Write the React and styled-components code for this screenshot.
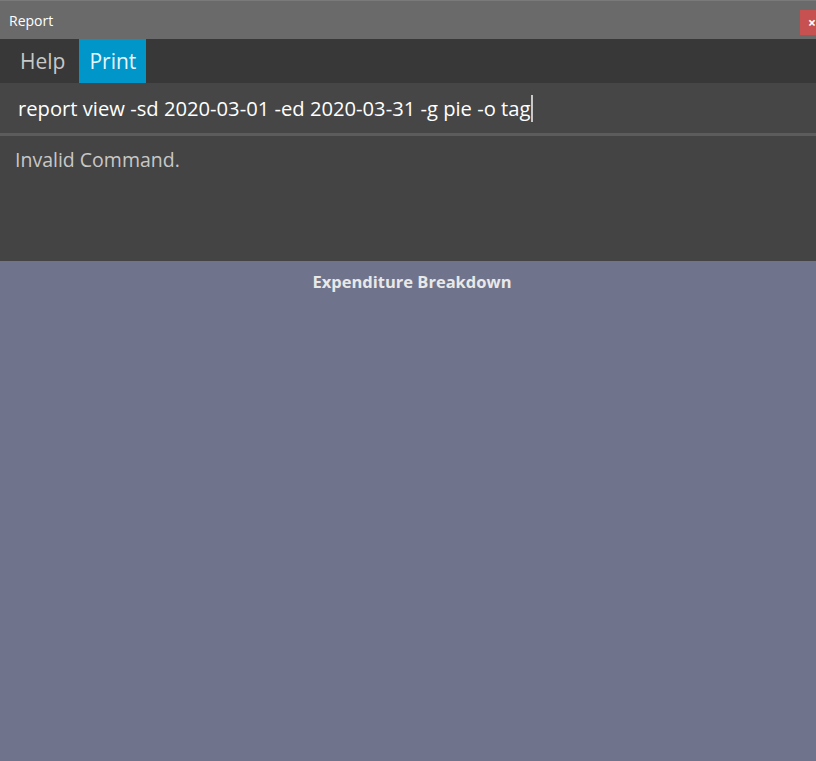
import React from "react";
import styled, { createGlobalStyle } from "styled-components";

const Global = createGlobalStyle`
  html, body {
    margin: 0;
    padding: 0;
    height: 100%;
    background: #6f738c;
  }
  #root {
    height: 100%;
  }
`;

const Window = styled.div`
  display: flex;
  flex-direction: column;
  width: 816px;
  height: 761px;
  font-family: "Open Sans", "Noto Sans", sans-serif;
  overflow: hidden;
`;

const TitleBar = styled.div`
  display: flex;
  align-items: center;
  justify-content: space-between;
  height: 39px;
  background: #6a6a6a;
  border-top: 1px solid #7a7a7a;
  box-sizing: border-box;
  padding-left: 9px;
`;

const Title = styled.span`
  color: #ffffff;
  font-size: 14px;
`;

const CloseButton = styled.div`
  display: flex;
  align-items: center;
  width: 16px;
  height: 25px;
  box-sizing: border-box;
  padding-left: 8px;
  margin-top: 4px;
  background: #c75050;
  color: #fff;
  font-size: 14px;
  font-weight: 700;
  overflow: hidden;
`;

const MenuBar = styled.div`
  display: flex;
  gap: 4px;
  height: 44px;
  background: #383838;
  padding-left: 10px;
`;

const MenuItem = styled.div`
  display: flex;
  align-items: center;
  padding: 0 10px;
  font-size: 21px;
  color: ${(p) => (p.active ? "#e6f4fb" : "#c8c8c8")};
  background: ${(p) => (p.active ? "#0096c9" : "transparent")};
`;

const CommandBox = styled.div`
  display: flex;
  align-items: center;
  height: 50px;
  padding-left: 18px;
  background: #464646;
  border-bottom: 3px solid #5c5c5c;
  color: #ffffff;
  font-size: 20.2px;
`;

const Caret = styled.span`
  display: inline-block;
  width: 2px;
  height: 27px;
  margin-left: 1px;
  background: #c8c8c8;
`;

const ResultArea = styled.div`
  height: 125px;
  background: #444444;
  padding: 10px 15px;
  box-sizing: border-box;
  color: #c8c8c8;
  font-size: 19.5px;
`;

const ChartArea = styled.div`
  flex: 1;
  background: #6f738c;
  display: flex;
  flex-direction: column;
  align-items: center;
  padding-top: 9px;
`;

const ChartTitle = styled.div`
  color: #e8e8e8;
  font-size: 16.5px;
  font-weight: 700;
  margin-left: 8px;
`;

export default function App() {
  return (
    <>
      <Global />
      <Window>
        <TitleBar>
          <Title>Report</Title>
          <CloseButton>×</CloseButton>
        </TitleBar>
        <MenuBar>
          <MenuItem>Help</MenuItem>
          <MenuItem active>Print</MenuItem>
        </MenuBar>
        <CommandBox>
          report view -sd 2020-03-01 -ed 2020-03-31 -g pie -o tag
          <Caret />
        </CommandBox>
        <ResultArea>Invalid Command.</ResultArea>
        <ChartArea>
          <ChartTitle>Expenditure Breakdown</ChartTitle>
        </ChartArea>
      </Window>
    </>
  );
}
